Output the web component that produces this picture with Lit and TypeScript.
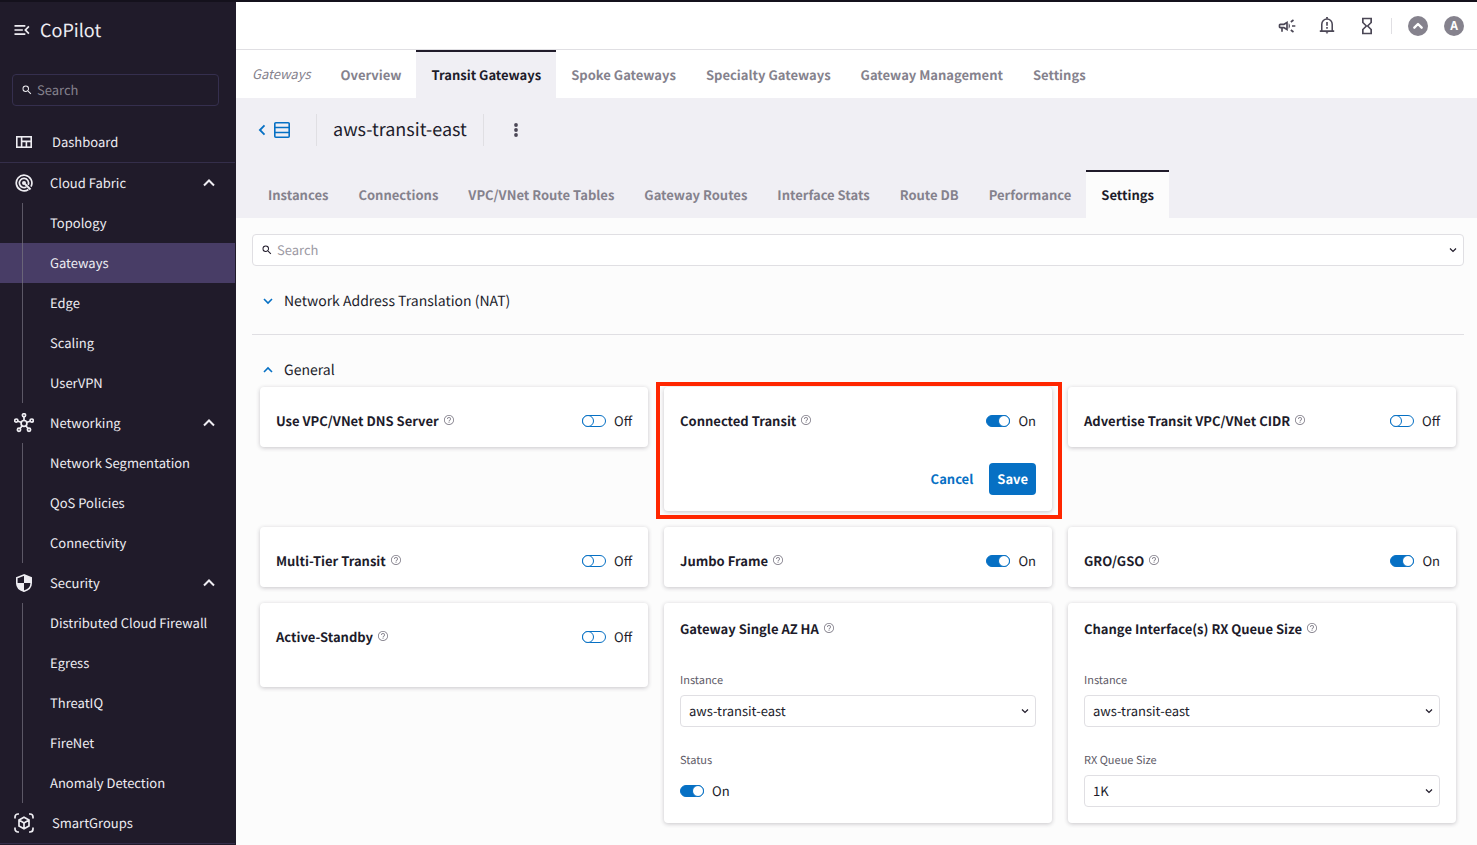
import { LitElement, html, css, svg, nothing } from "lit";
import { customElement, property } from "lit/decorators.js";
import { classMap } from "lit/directives/class-map.js";

const icon = (body: unknown, size = 24, box = 24) =>
  html`<svg class="icon" width=${size} height=${size} viewBox="0 0 ${box} ${box}" fill="currentColor" aria-hidden="true">${body}</svg>`;

const glyphs = {
  menuOpen: svg`<path d="M3 18h13v-2H3v2zM3 13h10v-2H3v2zm0-7v2h13V6H3zm18 9.590L17.420 12 21 8.410 19.590 7l-5 5 5 5L21 15.590z"/>`,
  search: svg`<path d="M15.5 14h-.79l-.28-.27A6.471 6.471 0 0 0 16 9.5 6.5 6.5 0 1 0 9.5 16c1.61 0 3.09-.59 4.23-1.57l.27.28v.79l5 4.99L20.49 19l-4.99-5zm-6 0C7.01 14 5 11.99 5 9.5S7.01 5 9.5 5 14 7.01 14 9.5 11.99 14 9.5 14z"/>`,
  up: svg`<path fill="none" stroke="currentColor" stroke-width="2.4" d="M6 15l6-6 6 6"/>`,
  upBold: svg`<path fill="none" stroke="currentColor" stroke-width="3.600" stroke-linecap="round" stroke-linejoin="round" d="M6.500 14.500L12 9l5.500 5.500"/>`,
  down: svg`<path fill="none" stroke="currentColor" stroke-width="2.4" d="M6 9l6 6 6-6"/>`,
  back: svg`<path fill="none" stroke="currentColor" stroke-width="2.200" d="M15 6.500L9.500 12l5.500 5.500"/>`,
  dashboard: svg`<g fill="none" stroke="currentColor" stroke-width="1.6"><rect x="0.8" y="2.8" width="14.4" height="10.4"/><path d="M5.6 3v10M5.6 7.4h9.6M10.4 7.4v5.6"/></g>`,
  fabric: svg`<g fill="none" stroke="currentColor" stroke-width="1.7"><path d="M13.4 15.500A7.800 7.800 0 1 1 16 12.600"/><path d="M11.4 12.9A4.600 4.600 0 1 1 13.2 10.800"/><path d="M10 10l5.500 5.500" stroke-width="1.9"/></g><circle cx="9" cy="9" r="2"/>`,
  network: svg`<g fill="none" stroke="currentColor" stroke-width="1.7"><circle cx="10" cy="10.4" r="2.9"/><circle cx="10" cy="2.3" r="1.6"/><circle cx="2.3" cy="7.6" r="1.6"/><circle cx="17.7" cy="7.6" r="1.6"/><circle cx="5" cy="16.8" r="1.6"/><circle cx="15" cy="16.8" r="1.6"/><path d="M10 4v3.4M3.9 8.2l3.2 1.1M16.1 8.2l-3.2 1.1M6 15.5l2-2.6M14 15.5l-2-2.6"/></g>`,
  shield: svg`<path fill="none" stroke="currentColor" stroke-width="1.600" d="M9 .9L1.800 3.800V9c0 4 3 7 7.200 8.200 4.200-1.200 7.200-4.200 7.200-8.200V3.800z"/><path d="M9 1v8h7.500V4zM9 9v8.500C4.500 16 1.900 13 1.500 9z"/>`,
  groups: svg`<g fill="none" stroke="currentColor" stroke-width="1.7"><path d="M1 5.500V4a3 3 0 0 1 3-3h1M15 1h1a3 3 0 0 1 3 3v1.500M19 14.500V16a3 3 0 0 1-3 3h-1M5 19H4a3 3 0 0 1-3-3v-1.500"/><path d="M10 4.300l5 2.800v5.800l-5 2.800-5-2.800V7.100zM5 7.100l5 2.900 5-2.900M10 10v5.500"/></g>`,
  campaign: svg`<path d="M18 11v2h4v-2h-4zm-2 6.610c.96.71 2.210 1.650 3.200 2.390.4-.53.8-1.070 1.200-1.600-.99-.74-2.240-1.680-3.200-2.400-.4.54-.8 1.080-1.200 1.610zM20.400 5.600c-.4-.53-.8-1.070-1.200-1.600-.99.74-2.240 1.680-3.200 2.400.4.53.8 1.070 1.200 1.600.96-.72 2.210-1.650 3.200-2.400zM4 9c-1.100 0-2 .9-2 2v2c0 1.100.9 2 2 2h1v4h2v-4h1l5 3V6L8 9H4zm5.030 1.710L11 9.530v4.940l-1.970-1.180-.48-.29H4v-2h4.550l.48-.29zM15.500 12c0-1.330-.58-2.530-1.500-3.350v6.690c.92-.81 1.500-2.010 1.500-3.340z"/>`,
  bell: svg`<path d="M9 0h2v2H9zM9 17h2.400a1.400 1.400 0 0 1-2.800 0z"/><path fill="none" stroke="currentColor" stroke-width="1.700" d="M2 15.700h16M4.200 15.400V8a5.800 5.800 0 0 1 11.600 0v7.400"/><path d="M9.100 5.600h1.800v4H9.100zM9.100 11.200h1.800V13H9.100z"/>`,
  hourglass: svg`<path d="M6 2v6h.01L6 8.010 10 12l-4 4 .01.01H6V22h12v-5.990h-.01L18 16l-4-4 4-3.990-.01-.01H18V2H6zm10 14.500V20H8v-3.500l4-4 4 4zm-4-5l-4-4V4h8v3.500l-4 4z"/>`,
  list: svg`<path fill="none" stroke="currentColor" stroke-width="1.600" d="M1.800.8h12.400a1 1 0 0 1 1 1v12.400a1 1 0 0 1-1 1H1.800a1 1 0 0 1-1-1V1.800a1 1 0 0 1 1-1zM1 5.500h14M1 10.500h14"/>`,
  dots: svg`<circle cx="8" cy="3" r="1.900"/><circle cx="8" cy="8" r="1.900"/><circle cx="8" cy="13" r="1.900"/>`,
  help: svg`<path d="M11.200 18h1.600v-1.800h-1.600V18zM12 2C6.480 2 2 6.480 2 12s4.480 10 10 10 10-4.480 10-10S17.520 2 12 2zm0 18.400c-4.640 0-8.400-3.760-8.400-8.400S7.360 3.600 12 3.600s8.400 3.760 8.400 8.400-3.760 8.400-8.400 8.400zM12 6c-2.210 0-4 1.790-4 4h1.800c0-1.200 1-2.200 2.200-2.200s2.200 1 2.200 2.200c0 2-3 1.750-3 5H13c0-2.250 3-2.500 3-5 0-2.210-1.790-4-4-4z"/>`,
};

const base = css`
  * {
    box-sizing: border-box;
  }
  a {
    color: inherit;
    text-decoration: none;
  }
  button,
  input,
  select {
    font: inherit;
    color: inherit;
    margin: 0;
    text-rendering: inherit;
  }
  button {
    padding: 0;
    border: 0;
    background: none;
    cursor: pointer;
  }
  .icon {
    display: block;
    flex: none;
  }
`;

interface NavGroup {
  label: string;
  icon: unknown;
  children: string[];
}

@customElement("side-nav")
class SideNav extends LitElement {
  static styles = [
    base,
    css`
      :host {
        display: block;
        padding-right: 1px;
        background: #201b2a;
        color: #eeedf2;
        overflow: hidden;
      }
      .brand {
        display: flex;
        align-items: center;
        gap: 8px;
        height: 56px;
        padding: 0 0 1px 12px;
        font-size: 18px;
      }
      .search {
        display: flex;
        align-items: center;
        gap: 4px;
        height: 32px;
        margin: 16px 16px 16px 12px;
        padding: 0 8px;
        border: 1px solid #352f4e;
        border-radius: 4px;
      }
      .search input {
        min-width: 0;
        flex: 1;
        padding: 0;
        border: 0;
        outline: 0;
        background: none;
      }
      .search input::placeholder {
        color: #85828d;
        opacity: 1;
      }
      .item {
        display: flex;
        align-items: center;
        width: 100%;
        height: 40px;
        padding: 0 16px 0 12px;
        text-align: left;
      }
      .top {
        height: 41px;
        border-bottom: 1px solid #342e4a;
      }
      .slot {
        display: flex;
        justify-content: center;
        width: 24px;
        margin-right: 14px;
        flex: none;
      }
      .top .slot {
        margin-right: 16px;
      }
      .label {
        flex: 1;
      }
      .children {
        margin: 0;
        padding: 0;
        list-style: none;
        background: linear-gradient(#5c5866, #5c5866) 22px 0 / 1px 100% no-repeat;
      }
      .child {
        display: flex;
        align-items: center;
        height: 40px;
        padding-left: 50px;
      }
      .child.active {
        background: linear-gradient(#6a6578, #6a6578) 22px 0 / 1px 100% no-repeat, #483d66;
      }
    `,
  ];

  private groups: NavGroup[] = [
    { label: "Cloud Fabric", icon: icon(glyphs.fabric, 18, 18), children: ["Topology", "Gateways", "Edge", "Scaling", "UserVPN"] },
    { label: "Networking", icon: icon(glyphs.network, 20, 20), children: ["Network Segmentation", "QoS Policies", "Connectivity"] },
    { label: "Security", icon: icon(glyphs.shield, 18, 18), children: ["Distributed Cloud Firewall", "Egress", "ThreatIQ", "FireNet", "Anomaly Detection"] },
  ];

  render() {
    return html`
      <div class="brand"><button aria-label="Collapse menu">${icon(glyphs.menuOpen, 20)}</button><span>CoPilot</span></div>
      <label class="search">${icon(glyphs.search, 12)}<input type="text" placeholder="Search" aria-label="Search menu" /></label>
      <nav>
        <a class="item top" href="#"><span class="slot">${icon(glyphs.dashboard, 16, 16)}</span>Dashboard</a>
        ${this.groups.map(
          (g) => html`
            <button class="item" aria-expanded="true">
              <span class="slot">${g.icon}</span><span class="label">${g.label}</span>${icon(glyphs.up, 20)}
            </button>
            <ul class="children">
              ${g.children.map((c) => html`<li><a class=${classMap({ child: true, active: c === "Gateways" })} href="#">${c}</a></li>`)}
            </ul>
          `
        )}
        <a class="item top" href="#"><span class="slot">${icon(glyphs.groups, 20, 20)}</span>SmartGroups</a>
      </nav>
    `;
  }
}

@customElement("tab-bar")
class TabBar extends LitElement {
  @property() section = "";
  @property({ type: Array }) tabs: string[] = [];
  @property() current = "";

  static styles = [
    base,
    css`
      :host {
        display: block;
      }
      nav {
        display: flex;
        height: 48px;
        white-space: nowrap;
      }
      .tab,
      .section {
        display: flex;
        align-items: center;
        padding: 0 15px;
        color: #85828d;
      }
      .tab {
        border-top: 2px solid transparent;
        border-bottom: 1px solid transparent;
        font-weight: 700;
      }
      .section,
      .tab:first-child {
        padding-left: 16px;
      }
      .section {
        font-style: italic;
      }
      .active {
        color: #201b2a;
        background: #f0eff4;
        border-top-color: #201b2a;
      }
      :host([level="page"]) .active {
        background: #fcfcfc;
      }
    `,
  ];

  render() {
    return html`<nav>
      ${this.section ? html`<span class="section">${this.section}</span>` : nothing}
      ${this.tabs.map((t) => html`<a class=${classMap({ tab: true, active: t === this.current })} href="#">${t}</a>`)}
    </nav>`;
  }
}

@customElement("toggle-switch")
class ToggleSwitch extends LitElement {
  @property({ type: Boolean }) on = false;
  @property() name = "";

  static styles = [
    base,
    css`
      :host {
        display: block;
      }
      label {
        display: flex;
        align-items: center;
        gap: 8px;
      }
      input {
        appearance: none;
        display: flex;
        width: 24px;
        height: 12px;
        border: 1px solid #0670c4;
        border-radius: 6px;
        background: #fff;
      }
      input::before {
        content: "";
        box-sizing: border-box;
        width: 12px;
        height: 12px;
        margin: -1px;
        border: 1px solid #0670c4;
        border-radius: 50%;
        background: #fff;
      }
      input:checked {
        justify-content: flex-end;
        background: #0670c4;
      }
    `,
  ];

  render() {
    return html`<label><input type="checkbox" role="switch" aria-label=${this.name} .checked=${this.on} /><span>${this.on ? "On" : "Off"}</span></label>`;
  }
}

@customElement("select-field")
class SelectField extends LitElement {
  @property() label = "";
  @property() value = "";

  static styles = [
    base,
    css`
      :host {
        display: block;
      }
      .label {
        display: block;
        font-size: 11px;
        line-height: 19px;
        margin-bottom: 5px;
        color: #5d5966;
      }
      .box {
        display: grid;
        align-items: center;
      }
      select,
      .icon {
        grid-area: 1 / 1;
      }
      select {
        appearance: none;
        width: 100%;
        height: 32px;
        padding: 0 28px 0 8px;
        border: 1px solid #e0dfe3;
        border-radius: 4px;
        background: #fff;
      }
      .icon {
        justify-self: end;
        margin-right: 5px;
        pointer-events: none;
      }
    `,
  ];

  render() {
    return html`<label class="label" for="field">${this.label}</label>
      <div class="box"><select id="field"><option>${this.value}</option></select>${icon(glyphs.down, 12)}</div>`;
  }
}

@customElement("setting-card")
class SettingCard extends LitElement {
  @property() heading = "";
  @property() state: "" | "on" | "off" = "";

  static styles = [
    base,
    css`
      :host {
        display: block;
        position: relative;
        padding: 16px;
        border-radius: 4px;
        background: #fff;
        box-shadow: 0 1px 4px rgba(32, 27, 42, 0.24);
      }
      :host([state]) {
        padding-top: 24px;
      }
      :host([tall]) {
        padding-bottom: 40px;
      }
      :host([highlighted])::after {
        content: "";
        position: absolute;
        inset: -5px -10px -8px -8px;
        border: 4px solid #ff2600;
        pointer-events: none;
      }
      .head {
        display: flex;
        align-items: center;
        justify-content: space-between;
        height: 20px;
      }
      .title {
        display: flex;
        align-items: center;
        gap: 4px;
        font-weight: 700;
      }
      .help {
        padding-bottom: 2px;
        color: #85828d;
      }
    `,
  ];

  render() {
    return html`
      <div class="head">
        <div class="title"><span>${this.heading}</span><button class="help" aria-label="Help: ${this.heading}">${icon(glyphs.help, 12)}</button></div>
        ${this.state ? html`<toggle-switch name=${this.heading} ?on=${this.state === "on"}></toggle-switch>` : nothing}
      </div>
      <slot></slot>
    `;
  }
}

@customElement("app-root")
class AppRoot extends LitElement {
  static styles = [
    base,
    css`
      :host {
        display: grid;
        grid-template-columns: 236px minmax(0, 1fr);
        box-sizing: border-box;
        height: 100vh;
        overflow: hidden;
        border-top: 2px solid #14111c;
        background: #fcfcfc;
        color: #201b2a;
        font-family: "Noto Sans CJK SC", "Noto Sans", sans-serif;
        font-size: 13px;
        line-height: 20px;
        text-rendering: geometricPrecision;
      }
      .toolbar {
        display: flex;
        align-items: center;
        justify-content: flex-end;
        gap: 12px;
        height: 48px;
        padding-right: 13px;
        border-bottom: 1px solid #e0dfe3;
        background: #fff;
        color: #4b4756;
      }
      .tools {
        display: flex;
        gap: 16px;
      }
      .tool {
        display: flex;
        align-items: center;
        justify-content: center;
        width: 24px;
        height: 24px;
      }
      .avatars {
        display: flex;
        gap: 16px;
        padding-left: 17px;
        background: linear-gradient(#e0dfe3, #e0dfe3) 0 50% / 1px 16px no-repeat;
      }
      .avatar {
        display: flex;
        align-items: center;
        justify-content: center;
        width: 20px;
        height: 20px;
        border-radius: 50%;
        background: #85828d;
        color: #fff;
        font-size: 12px;
        font-weight: 700;
      }
      .primary {
        background: #fff;
      }
      .gateway {
        padding: 16px 16px 0;
        background: #f0eff4;
      }
      .crumb {
        display: flex;
        align-items: center;
        height: 32px;
        margin-bottom: 24px;
      }
      .back {
        display: flex;
        align-items: center;
        gap: 2px;
        width: 64px;
        color: #0670c4;
      }
      .name {
        height: 32px;
        margin: 0;
        padding: 0 16px;
        border: solid #e0dfe3;
        border-width: 0 1px;
        font-size: 18px;
        font-weight: 400;
        line-height: 31px;
      }
      .more {
        margin-left: 24px;
        color: #4b4756;
      }
      .content {
        padding: 16px 13px 16px 16px;
      }
      .search {
        display: flex;
        align-items: center;
        gap: 4px;
        height: 32px;
        padding: 0 4px 0 8px;
        border: 1px solid #e0dfe3;
        border-radius: 4px;
        background: #fff;
      }
      .search input {
        flex: 1;
        min-width: 0;
        padding: 0;
        border: 0;
        outline: 0;
        background: none;
      }
      .search input::placeholder {
        color: #9c99a3;
        opacity: 1;
      }
      .section {
        padding-top: 18px;
      }
      .closed {
        padding-bottom: 16px;
        border-bottom: 1px solid #e0dfe3;
      }
      .toggle {
        display: flex;
        align-items: center;
        gap: 8px;
        height: 34px;
        padding: 0 0 1px 8px;
        font-size: 14px;
      }
      .toggle .icon {
        color: #0670c4;
      }
      .cards {
        display: grid;
        grid-template-columns: repeat(3, minmax(0, 1fr));
        align-items: start;
        gap: 16px;
        padding: 0 8px;
      }
      .actions {
        display: flex;
        justify-content: flex-end;
        gap: 8px;
        margin-top: 32px;
      }
      .action {
        height: 32px;
        padding: 0 8px;
        border-radius: 4px;
        color: #0670c4;
        font-weight: 700;
      }
      .save {
        background: #0670c4;
        color: #fff;
      }
      .fields {
        display: grid;
        gap: 24px;
        margin-top: 32px;
      }
      .caption {
        margin-bottom: 5px;
        color: #5d5966;
        font-size: 11px;
        line-height: 19px;
      }
      .status {
        display: flex;
        align-items: center;
        height: 32px;
      }
    `,
  ];

  render() {
    return html`
      <side-nav></side-nav>
      <main>
        <header class="toolbar">
          <div class="tools">
            <button class="tool" aria-label="Announcements">${icon(glyphs.campaign, 20)}</button>
            <button class="tool" aria-label="Notifications">${icon(glyphs.bell, 18, 20)}</button>
            <button class="tool" aria-label="Tasks">${icon(glyphs.hourglass, 20)}</button>
          </div>
          <div class="avatars">
            <button class="avatar" aria-label="Controller">${icon(glyphs.upBold, 16)}</button>
            <button class="avatar" aria-label="Account">A</button>
          </div>
        </header>
        <tab-bar
          class="primary"
          section="Gateways"
          current="Transit Gateways"
          .tabs=${["Overview", "Transit Gateways", "Spoke Gateways", "Specialty Gateways", "Gateway Management", "Settings"]}
        ></tab-bar>
        <section class="gateway">
          <div class="crumb">
            <a class="back" href="#" aria-label="Back to list">${icon(glyphs.back, 20)}${icon(glyphs.list, 16, 16)}</a>
            <h1 class="name">aws-transit-east</h1>
            <button class="more" aria-label="More actions">${icon(glyphs.dots, 16, 16)}</button>
          </div>
          <tab-bar
            level="page"
            current="Settings"
            .tabs=${["Instances", "Connections", "VPC/VNet Route Tables", "Gateway Routes", "Interface Stats", "Route DB", "Performance", "Settings"]}
          ></tab-bar>
        </section>
        <div class="content">
          <label class="search">${icon(glyphs.search, 12)}<input type="text" placeholder="Search" aria-label="Search settings" />${icon(glyphs.down, 12)}</label>
          <section class="section closed">
            <button class="toggle" aria-expanded="false">${icon(glyphs.down, 16)}Network Address Translation (NAT)</button>
          </section>
          <section class="section">
            <button class="toggle" aria-expanded="true">${icon(glyphs.up, 16)}General</button>
            <div class="cards">
              <setting-card heading="Use VPC/VNet DNS Server" state="off"></setting-card>
              <setting-card heading="Connected Transit" state="on" highlighted>
                <div class="actions">
                  <button class="action">Cancel</button>
                  <button class="action save">Save</button>
                </div>
              </setting-card>
              <setting-card heading="Advertise Transit VPC/VNet CIDR" state="off"></setting-card>
              <setting-card heading="Multi-Tier Transit" state="off"></setting-card>
              <setting-card heading="Jumbo Frame" state="on"></setting-card>
              <setting-card heading="GRO/GSO" state="on"></setting-card>
              <setting-card heading="Active-Standby" state="off" tall></setting-card>
              <setting-card heading="Gateway Single AZ HA">
                <div class="fields">
                  <select-field label="Instance" value="aws-transit-east"></select-field>
                  <div>
                    <div class="caption">Status</div>
                    <div class="status"><toggle-switch name="Status" on></toggle-switch></div>
                  </div>
                </div>
              </setting-card>
              <setting-card heading="Change Interface(s) RX Queue Size">
                <div class="fields">
                  <select-field label="Instance" value="aws-transit-east"></select-field>
                  <select-field label="RX Queue Size" value="1K"></select-field>
                </div>
              </setting-card>
            </div>
          </section>
        </div>
      </main>
    `;
  }
}
